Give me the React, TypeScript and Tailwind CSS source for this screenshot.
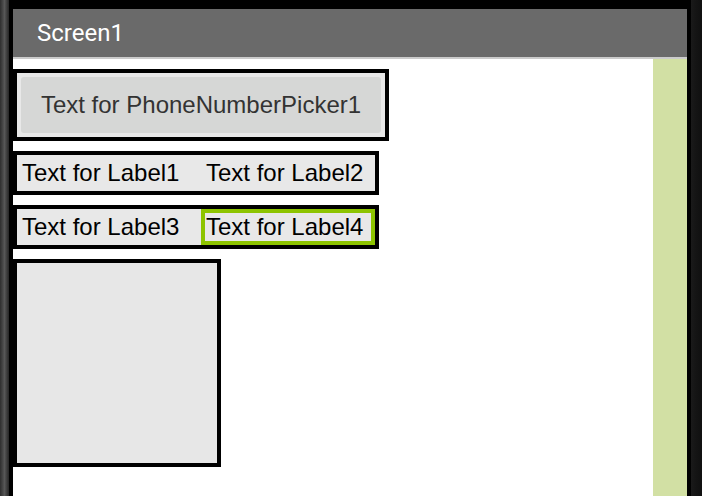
import React from "react";

const sans = { fontFamily: '"Liberation Sans", Arial, sans-serif' };

function Label({ text, selected, width }: { text: string; selected?: boolean; width: string }) {
  return (
    <div
      className={`${width} border-4 ${selected ? "border-[#8dc400]" : "border-transparent"} px-[1px] text-[24px] leading-[28px] text-black whitespace-nowrap`}
    >
      {text}
    </div>
  );
}

export default function App() {
  return (
    <div className="w-[702px] h-[496px] bg-black flex overflow-hidden" style={sans}>
      {/* left phone edge */}
      <div className="w-[9px] h-full bg-gradient-to-r from-[#2e2e2e] via-[#575757] to-[#262626]" />
      <div className="w-[4px] h-full bg-black" />
      {/* screen */}
      <div className="w-[674px] h-full flex flex-col pt-[9px]">
        <div className="h-[48px] bg-[#6a6a6a] flex items-center pl-[24px]">
          <span className="text-white text-[24px]" style={{ fontFamily: 'Roboto, "Liberation Sans", sans-serif' }}>
            Screen1
          </span>
        </div>
        <div className="h-[2px] bg-[#cbcbcb]" />
        <div className="flex flex-1">
          <div className="flex-1 bg-white flex flex-col items-start gap-[10px] pt-[10px]">
            <div className="w-[376px] h-[72px] border-4 border-black bg-[#e8e8e8] p-[4px]">
              <div className="w-full h-full rounded-[3px] bg-[#d6d7d6] flex items-center justify-center text-[24px] text-[#333333] whitespace-nowrap">
                Text for PhoneNumberPicker1
              </div>
            </div>
            <div className="w-[366px] border-4 border-black bg-[#e8e8e8] flex">
              <Label text="Text for Label1" width="w-[184px]" />
              <Label text="Text for Label2" width="w-[174px]" />
            </div>
            <div className="w-[366px] border-4 border-black bg-[#e8e8e8] flex">
              <Label text="Text for Label3" width="w-[184px]" />
              <Label text="Text for Label4" width="w-[174px]" selected />
            </div>
            <div className="w-[208px] h-[208px] border-4 border-black bg-[#e7e7e7]" />
          </div>
          <div className="w-[34px] bg-[#d2e0a4]" />
        </div>
      </div>
      {/* right phone edge */}
      <div className="w-[4px] h-full bg-black" />
      <div className="w-[11px] h-full bg-gradient-to-r from-[#1a1a1a] via-[#141414] to-[#101010]" />
    </div>
  );
}
